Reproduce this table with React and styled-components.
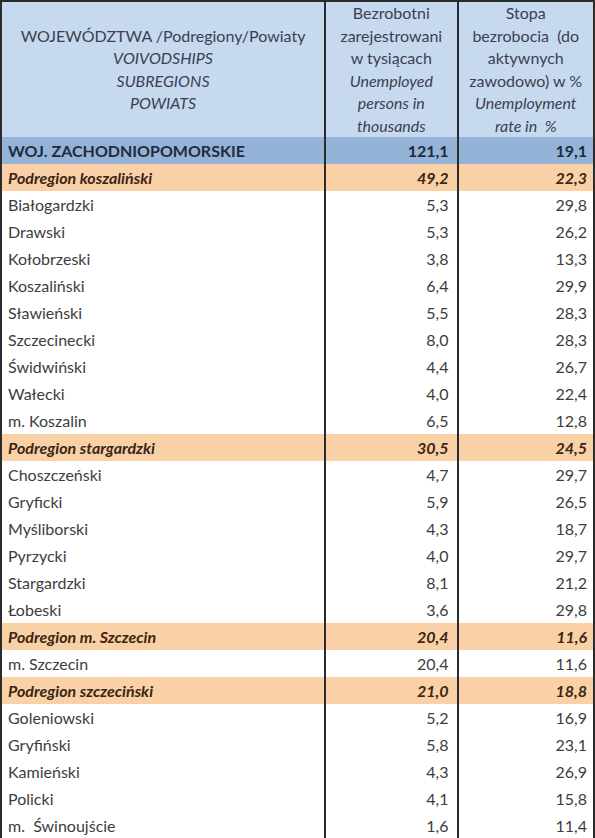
import React from 'react';
import styled, { createGlobalStyle } from 'styled-components';

const GlobalStyle = createGlobalStyle`
  html, body {
    margin: 0;
    padding: 0;
    background: #ffffff;
  }
  body {
    font-family: Lato, "Open Sans", sans-serif;
  }
`;

const rows = [
  { name: 'WOJ. ZACHODNIOPOMORSKIE', persons: '121,1', rate: '19,1', kind: 'voiv' },
  { name: 'Podregion koszaliński', persons: '49,2', rate: '22,3', kind: 'sub' },
  { name: 'Białogardzki', persons: '5,3', rate: '29,8' },
  { name: 'Drawski', persons: '5,3', rate: '26,2' },
  { name: 'Kołobrzeski', persons: '3,8', rate: '13,3' },
  { name: 'Koszaliński', persons: '6,4', rate: '29,9' },
  { name: 'Sławieński', persons: '5,5', rate: '28,3' },
  { name: 'Szczecinecki', persons: '8,0', rate: '28,3' },
  { name: 'Świdwiński', persons: '4,4', rate: '26,7' },
  { name: 'Wałecki', persons: '4,0', rate: '22,4' },
  { name: 'm. Koszalin', persons: '6,5', rate: '12,8' },
  { name: 'Podregion stargardzki', persons: '30,5', rate: '24,5', kind: 'sub' },
  { name: 'Choszczeński', persons: '4,7', rate: '29,7' },
  { name: 'Gryficki', persons: '5,9', rate: '26,5' },
  { name: 'Myśliborski', persons: '4,3', rate: '18,7' },
  { name: 'Pyrzycki', persons: '4,0', rate: '29,7' },
  { name: 'Stargardzki', persons: '8,1', rate: '21,2' },
  { name: 'Łobeski', persons: '3,6', rate: '29,8' },
  { name: 'Podregion m. Szczecin', persons: '20,4', rate: '11,6', kind: 'sub' },
  { name: 'm. Szczecin', persons: '20,4', rate: '11,6' },
  { name: 'Podregion szczeciński', persons: '21,0', rate: '18,8', kind: 'sub' },
  { name: 'Goleniowski', persons: '5,2', rate: '16,9' },
  { name: 'Gryfiński', persons: '5,8', rate: '23,1' },
  { name: 'Kamieński', persons: '4,3', rate: '26,9' },
  { name: 'Policki', persons: '4,1', rate: '15,8' },
  { name: 'm.  Świnoujście', persons: '1,6', rate: '11,4' },
];

const rowBg = { voiv: '#95b3d7', sub: '#fad0a6' };
const rowInk = { voiv: '#1e2b40', sub: '#3a2614' };

const Table = styled.table`
  border-collapse: collapse;
  width: 595px;
  table-layout: fixed;
  border: 2px solid #2b2b2b;
  font-size: 16px;
  color: #3d3d3d;
`;

const HeadCell = styled.th`
  height: 132px;
  padding: 0 2px;
  background: #c6d9ee;
  font-weight: 400;
  color: #3c3f52;
  line-height: 22.5px;
  text-align: center;
  vertical-align: middle;
  border-left: ${({ $first }) => ($first ? 'none' : '2px solid #2b2b2b')};
`;

const Line = styled.div`
  font-style: ${({ $en }) => ($en ? 'italic' : 'normal')};
  white-space: nowrap;
`;

const Row = styled.tr`
  height: 27px;
  background: ${({ $kind }) => rowBg[$kind] || '#ffffff'};
  color: ${({ $kind }) => rowInk[$kind] || '#3d3d3d'};
  font-weight: ${({ $kind }) => ($kind ? 700 : 400)};
  font-style: ${({ $kind }) => ($kind === 'sub' ? 'italic' : 'normal')};
`;

const NameCell = styled.td`
  padding: 0 0 0 6px;
  white-space: pre;
  vertical-align: middle;
`;

const NumCell = styled.td`
  padding: 0 ${({ $pad }) => $pad}px 0 0;
  text-align: right;
  vertical-align: middle;
  border-left: 2px solid #2b2b2b;
`;

export default function App() {
  return (
    <>
      <GlobalStyle />
      <Table>
        <colgroup>
          <col style={{ width: 323 }} />
          <col style={{ width: 132 }} />
          <col style={{ width: 136 }} />
        </colgroup>
        <thead>
          <tr>
            <HeadCell $first>
              <Line>WOJEWÓDZTWA /Podregiony/Powiaty</Line>
              <Line $en>VOIVODSHIPS</Line>
              <Line $en>SUBREGIONS</Line>
              <Line $en>POWIATS</Line>
            </HeadCell>
            <HeadCell>
              <Line>Bezrobotni</Line>
              <Line>zarejestrowani</Line>
              <Line>w tysiącach</Line>
              <Line $en>Unemployed</Line>
              <Line $en>persons in</Line>
              <Line $en>thousands</Line>
            </HeadCell>
            <HeadCell>
              <Line>Stopa</Line>
              <Line>bezrobocia&nbsp; (do</Line>
              <Line>aktywnych</Line>
              <Line>zawodowo) w %</Line>
              <Line $en>Unemployment</Line>
              <Line $en>rate in&nbsp; %</Line>
            </HeadCell>
          </tr>
        </thead>
        <tbody>
          {rows.map((r) => (
            <Row key={r.name} $kind={r.kind}>
              <NameCell>{r.name}</NameCell>
              <NumCell $pad={8}>{r.persons}</NumCell>
              <NumCell $pad={6}>{r.rate}</NumCell>
            </Row>
          ))}
        </tbody>
      </Table>
    </>
  );
}
